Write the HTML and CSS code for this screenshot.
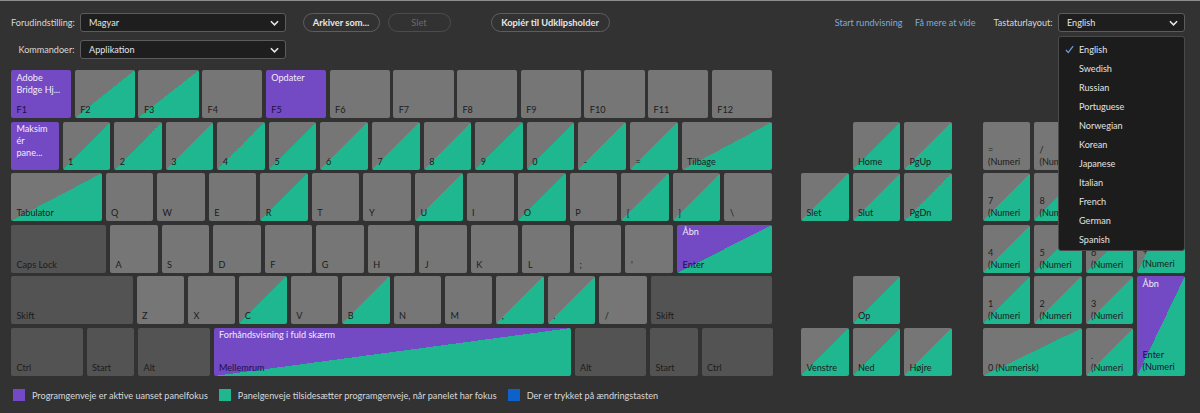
FILE: index.html
```html
<!DOCTYPE html>
<html lang="da">
<head>
  <meta charset="UTF-8">
  <meta name="viewport" content="width=device-width, initial-scale=1.0">
  <title>Tastaturgenveje</title>
  <link rel="stylesheet" href="styles.css">
</head>
<body>
<div class="panel">
  <!-- top controls -->
  <div class="toolbar">
    <div class="bar-row">
      <span class="field-label">Forudindstilling:</span>
      <div class="select preset">Magyar
        <svg class="chevron" viewBox="0 0 10 6"><path d="M1 1l4 4 4-4"/></svg>
      </div>
      <button class="pill save">Arkiver som...</button>
      <button class="pill delete" disabled>Slet</button>
      <button class="pill copy">Kopiér til Udklipsholder</button>
      <a class="link tour">Start rundvisning</a>
      <a class="link more">Få mere at vide</a>
      <span class="field-label layout-label">Tastaturlayout:</span>
      <div class="select layout">English
        <svg class="chevron" viewBox="0 0 10 6"><path d="M1 1l4 4 4-4"/></svg>
      </div>
    </div>
    <div class="bar-row second">
      <span class="field-label">Kommandoer:</span>
      <div class="select preset">Applikation
        <svg class="chevron" viewBox="0 0 10 6"><path d="M1 1l4 4 4-4"/></svg>
      </div>
    </div>
  </div>

  <!-- open dropdown -->
  <ul class="menu">
    <li class="checked"><svg class="check" viewBox="0 0 10 10"><path d="M1 5.5l2.6 3L9 1.2"/></svg>English</li>
    <li>Swedish</li>
    <li>Russian</li>
    <li>Portuguese</li>
    <li>Norwegian</li>
    <li>Korean</li>
    <li>Japanese</li>
    <li>Italian</li>
    <li>French</li>
    <li>German</li>
    <li>Spanish</li>
  </ul>

  <div class="board">
    <div class="keyboard">
      <div class="row fn">
        <div class="key app"><span class="cmd">Adobe<br>Bridge Hj...</span><span class="name">F1</span></div>
        <div class="key diag"><span class="name">F2</span></div>
        <div class="key diag"><span class="name">F3</span></div>
        <div class="key"><span class="name">F4</span></div>
        <div class="key app"><span class="cmd">Opdater</span><span class="name">F5</span></div>
        <div class="key"><span class="name">F6</span></div>
        <div class="key"><span class="name">F7</span></div>
        <div class="key"><span class="name">F8</span></div>
        <div class="key"><span class="name">F9</span></div>
        <div class="key"><span class="name">F10</span></div>
        <div class="key"><span class="name">F11</span></div>
        <div class="key"><span class="name">F12</span></div>
      </div>
      <div class="row">
        <div class="key app tight"><span class="cmd">Maksim<br>ér<br>pane...</span><span class="name">`</span></div>
        <div class="key diag"><span class="name">1</span></div>
        <div class="key diag"><span class="name">2</span></div>
        <div class="key diag"><span class="name">3</span></div>
        <div class="key diag"><span class="name">4</span></div>
        <div class="key diag"><span class="name">5</span></div>
        <div class="key diag"><span class="name">6</span></div>
        <div class="key diag"><span class="name">7</span></div>
        <div class="key diag"><span class="name">8</span></div>
        <div class="key diag"><span class="name">9</span></div>
        <div class="key diag"><span class="name">0</span></div>
        <div class="key diag"><span class="name">-</span></div>
        <div class="key diag"><span class="name">=</span></div>
        <div class="key diag w-tab"><span class="name">Tilbage</span></div>
      </div>
      <div class="row">
        <div class="key diag w-tab"><span class="name">Tabulator</span></div>
        <div class="key"><span class="name">Q</span></div>
        <div class="key"><span class="name">W</span></div>
        <div class="key"><span class="name">E</span></div>
        <div class="key diag"><span class="name">R</span></div>
        <div class="key"><span class="name">T</span></div>
        <div class="key"><span class="name">Y</span></div>
        <div class="key diag"><span class="name">U</span></div>
        <div class="key"><span class="name">I</span></div>
        <div class="key diag"><span class="name">O</span></div>
        <div class="key"><span class="name">P</span></div>
        <div class="key diag"><span class="name">[</span></div>
        <div class="key diag"><span class="name">]</span></div>
        <div class="key"><span class="name">\</span></div>
      </div>
      <div class="row">
        <div class="key mod w-caps"><span class="name">Caps Lock</span></div>
        <div class="key"><span class="name">A</span></div>
        <div class="key"><span class="name">S</span></div>
        <div class="key"><span class="name">D</span></div>
        <div class="key"><span class="name">F</span></div>
        <div class="key"><span class="name">G</span></div>
        <div class="key"><span class="name">H</span></div>
        <div class="key"><span class="name">J</span></div>
        <div class="key"><span class="name">K</span></div>
        <div class="key"><span class="name">L</span></div>
        <div class="key"><span class="name">;</span></div>
        <div class="key"><span class="name">'</span></div>
        <div class="key mixed w-caps"><span class="cmd">Åbn</span><span class="name">Enter</span></div>
      </div>
      <div class="row">
        <div class="key mod w-shift"><span class="name">Skift</span></div>
        <div class="key"><span class="name">Z</span></div>
        <div class="key"><span class="name">X</span></div>
        <div class="key diag"><span class="name">C</span></div>
        <div class="key"><span class="name">V</span></div>
        <div class="key diag"><span class="name">B</span></div>
        <div class="key"><span class="name">N</span></div>
        <div class="key"><span class="name">M</span></div>
        <div class="key diag"><span class="name">,</span></div>
        <div class="key diag"><span class="name">.</span></div>
        <div class="key"><span class="name">/</span></div>
        <div class="key mod w-shift"><span class="name">Skift</span></div>
      </div>
      <div class="row">
        <div class="key mod w-ctrl"><span class="name">Ctrl</span></div>
        <div class="key mod"><span class="name">Start</span></div>
        <div class="key mod w-ctrl"><span class="name">Alt</span></div>
        <div class="key mixed w-space"><span class="cmd">Forhåndsvisning i fuld skærm</span><span class="name">Mellemrum</span></div>
        <div class="key mod w-ctrl"><span class="name">Alt</span></div>
        <div class="key mod"><span class="name">Start</span></div>
        <div class="key mod w-ctrl"><span class="name">Ctrl</span></div>
      </div>
    </div>

    <div class="nav-keys">
      <div class="key diag r2 c2"><span class="name">Home</span></div>
      <div class="key diag r2 c3"><span class="name">PgUp</span></div>
      <div class="key diag r3 c1"><span class="name">Slet</span></div>
      <div class="key diag r3 c2"><span class="name">Slut</span></div>
      <div class="key diag r3 c3"><span class="name">PgDn</span></div>
      <div class="key diag r5 c2"><span class="name">Op</span></div>
      <div class="key diag r6 c1"><span class="name">Venstre</span></div>
      <div class="key diag r6 c2"><span class="name">Ned</span></div>
      <div class="key diag r6 c3"><span class="name">Højre</span></div>
    </div>

    <div class="numpad">
      <div class="key"><span class="name">=<br>(Numeri</span></div>
      <div class="key"><span class="name">/<br>(Numeri</span></div>
      <div class="key"><span class="name">*<br>(Numeri</span></div>
      <div class="key"><span class="name">-<br>(Numeri</span></div>
      <div class="key diag"><span class="name">7<br>(Numeri</span></div>
      <div class="key diag"><span class="name">8<br>(Numeri</span></div>
      <div class="key diag"><span class="name">9<br>(Numeri</span></div>
      <div class="key diag tall"><span class="name raised">+<br>(Numeri</span></div>
      <div class="key diag"><span class="name">4<br>(Numeri</span></div>
      <div class="key diag"><span class="name">5<br>(Numeri</span></div>
      <div class="key diag"><span class="name">6<br>(Numeri</span></div>
      <div class="key diag"><span class="name">1<br>(Numeri</span></div>
      <div class="key diag"><span class="name">2<br>(Numeri</span></div>
      <div class="key diag"><span class="name">3<br>(Numeri</span></div>
      <div class="key mixed tall"><span class="cmd">Åbn</span><span class="name raised">Enter<br>(Numeri</span></div>
      <div class="key diag wide"><span class="name">0 (Numerisk)</span></div>
      <div class="key diag"><span class="name">.<br>(Numeri</span></div>
    </div>
  </div>

  <div class="legend">
    <span class="swatch purple"></span>
    <span class="legend-text">Programgenveje er aktive uanset panelfokus</span>
    <span class="swatch green"></span>
    <span class="legend-text">Panelgenveje tilsidesætter programgenveje, når panelet har fokus</span>
    <span class="swatch blue"></span>
    <span class="legend-text">Der er trykket på ændringstasten</span>
  </div>
</div>
</body>
</html>
```

FILE: styles.css
```css
* {
  box-sizing: border-box;
}
html, body {
  margin: 0;
  height: 100%;
  overflow: hidden;
}
body {
  font-family: Lato, "Liberation Sans", sans-serif;
  font-size: 9.1px;
  color: #d8d8d8;
  background-color: #323232;
}
.panel {
  position: relative;
  height: 413px;
  padding: 13px 0 0 11px;
  border-top: 1px solid #8d8d8d;
}

/* toolbar */
.bar-row {
  display: flex;
  align-items: center;
  height: 19px;
  margin-top: -1px;
}
.bar-row:first-child {
  padding-right: 15px;
}
.bar-row.second {
  margin-top: 8px;
}
.field-label {
  width: 63.5px;
  text-align: right;
  white-space: nowrap;
}
.select {
  position: relative;
  display: flex;
  align-items: center;
  height: 19px;
  padding-left: 8px;
  margin-left: 5.5px;
  color: #e4e4e4;
  background-color: #1e1e1e;
  border: 1px solid #5c5c5c;
  border-radius: 3px;
}
.select.preset {
  width: 206px;
}
.select.layout {
  width: 127px;
}
.chevron {
  position: absolute;
  right: 6px;
  top: 6px;
  width: 9px;
  height: 6px;
  fill: none;
  stroke: #e8e8e8;
  stroke-width: 1.7;
}
.pill {
  height: 19px;
  padding: 0;
  font-family: inherit;
  font-size: 9.3px;
  font-weight: 700;
  color: #e6e6e6;
  background-color: #323232;
  border: 1px solid #5e5e5e;
  border-radius: 10px;
}
.pill.save {
  width: 77px;
  margin-left: 16.5px;
}
.pill.delete {
  width: 63px;
  margin-left: 8px;
  font-weight: 400;
  color: #6a6a6a;
  border-color: #4c4c4c;
}
.pill.copy {
  width: 119px;
  margin-left: 40px;
}
.link {
  color: #7cacdf;
  white-space: nowrap;
}
.link.tour {
  margin-left: auto;
}
.link.more {
  margin-left: 12.5px;
}
.layout-label {
  width: auto;
  margin-left: 18px;
}

/* dropdown */
.menu {
  position: absolute;
  z-index: 2;
  top: 35px;
  left: 1058px;
  width: 127px;
  height: 215px;
  margin: 0;
  padding: 3px 0 0 20px;
  list-style: none;
  color: #e2e2e2;
  background-color: #1c1c1c;
  border: 1px solid #4a4a4a;
  border-radius: 3px;
}
.menu li {
  position: relative;
  height: 19px;
  line-height: 19px;
}
.check {
  position: absolute;
  left: -14px;
  top: 5px;
  width: 9px;
  height: 9px;
  fill: none;
  stroke: #6fa6e6;
  stroke-width: 1.3;
}

/* keys */
.board {
  display: flex;
  margin-top: 11px;
}
.keyboard {
  display: flex;
  flex-direction: column;
  gap: 3.6px;
  width: 761px;
}
.row {
  display: flex;
  gap: 4px;
  height: 48px;
}
.row.fn {
  gap: 3.4px;
}
.key {
  flex: 1;
  min-width: 0;
  display: flex;
  flex-direction: column;
  padding: 1.5px 4px 2px 5.5px;
  line-height: 12px;
  color: #1c1c1c;
  background-color: #767676;
  border-radius: 2px;
  overflow: hidden;
}
.key .name {
  margin-top: auto;
  white-space: nowrap;
}
.key .name.raised {
  margin-bottom: 1px;
}
.key.tight .name {
  margin-top: 0;
  line-height: 5px;
}
.key .cmd {
  color: #f0ecfa;
}
.key.mod {
  background-color: #535353;
}
.key.app {
  background-color: #7449c4;
}
.key.app .name {
  color: #1d0f46;
}
.key.diag {
  background: linear-gradient(to bottom right, #767676 50%, #1fb78f 50%);
}
.key.mixed {
  background: linear-gradient(to bottom right, #7449c4 50%, #1fb78f 50%);
}
.key.mixed .name {
  color: #1d0f46;
}
.w-tab {
  flex: 0 0 90.5px;
}
.w-caps {
  flex: 0 0 95px;
}
.w-shift {
  flex: 0 0 121.5px;
}
.w-ctrl {
  flex: 0 0 71.5px;
}
.w-space {
  flex: 0 0 357px;
}
.row .w-ctrl + .mod {
  flex: 0 0 47.5px;
}

/* navigation block */
.nav-keys {
  display: grid;
  grid-template-columns: repeat(3, 47.5px);
  grid-template-rows: repeat(6, 48px);
  gap: 3.6px 4px;
  margin-left: 29px;
}
.r2 { grid-row: 2; }
.r3 { grid-row: 3; }
.r5 { grid-row: 5; }
.r6 { grid-row: 6; }
.c1 { grid-column: 1; }
.c2 { grid-column: 2; }
.c3 { grid-column: 3; }

/* numeric block */
.numpad {
  display: grid;
  grid-template-columns: repeat(4, 47.5px);
  grid-template-rows: repeat(5, 48px);
  gap: 3.6px 4px;
  height: 254px;
  margin-top: 51.6px;
  margin-left: 31px;
}
.numpad .tall {
  grid-row: span 2;
}
.numpad .wide {
  grid-column: span 2;
}

/* legend */
.legend {
  display: flex;
  align-items: center;
  height: 13px;
  margin-top: 13px;
  padding-left: 2px;
}
.swatch {
  width: 12px;
  height: 12px;
}
.swatch.purple {
  background-color: #7449c4;
}
.swatch.green {
  background-color: #1fb78f;
}
.swatch.blue {
  background-color: #0d62c9;
}
.legend-text {
  margin: 0 11px 0 7px;
  white-space: nowrap;
}
```
